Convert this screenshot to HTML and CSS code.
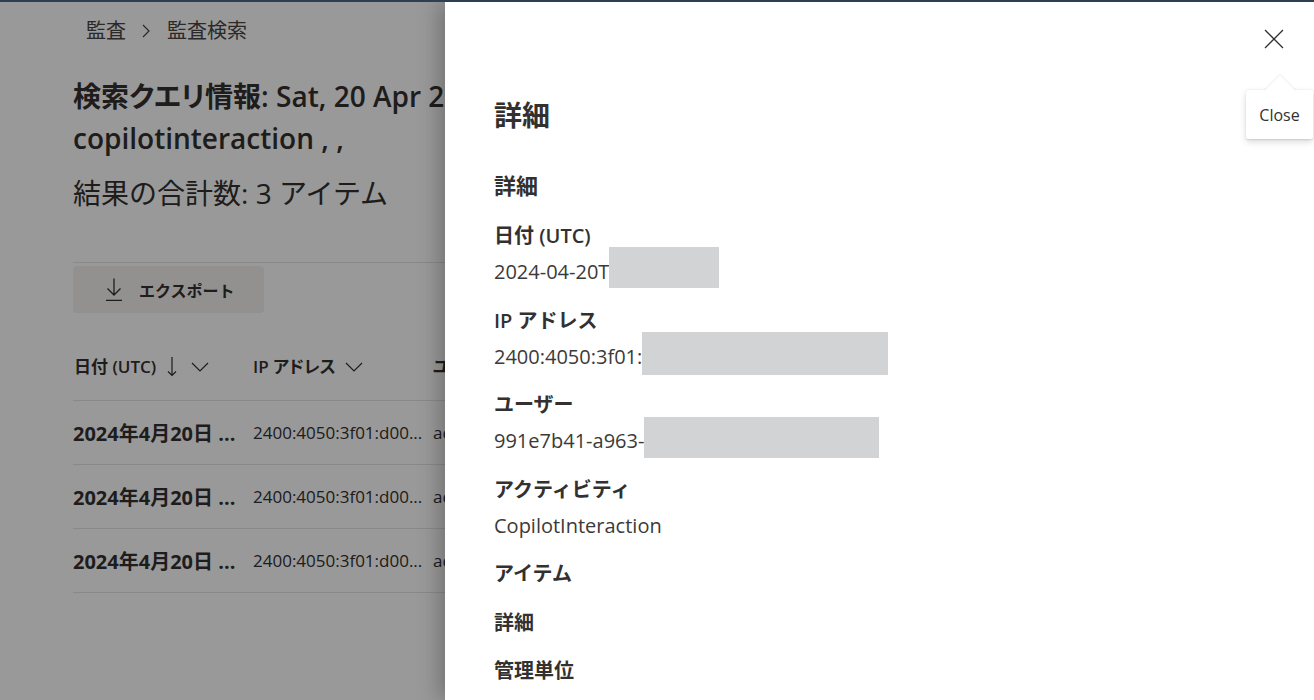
FILE: index.html
```html
<!DOCTYPE html>
<html lang="ja">
<head>
<meta charset="utf-8">
<title>監査検索</title>
<link rel="stylesheet" href="styles.css">
</head>
<body>
<div class="topbar"></div>
<main class="page">
  <nav class="breadcrumb">
    <span>監査</span>
    <svg class="crumb-chev" width="12" height="14" viewBox="0 0 12 14"><polyline points="3,1 9,7 3,13" fill="none" stroke="#484644" stroke-width="1.2"/></svg>
    <span>監査検索</span>
  </nav>
  <h1 class="title">
    <span class="line">検索クエリ情報: Sat, 20 Apr 2024 00:00:00 GMT - Sat, 20 Apr 2024 23:59:59 GMT,</span>
    <span class="line">copilotinteraction , ,</span>
  </h1>
  <p class="total">結果の合計数: 3 アイテム</p>
  <hr class="divider">
  <button class="export" type="button">
    <svg width="16" height="23" viewBox="0 0 16 23"><path d="M8 0.5V17M1.5 10.5L8 17L14.5 10.5M0 22.5H16" fill="none" stroke="#323130" stroke-width="1.3"/></svg>
    <span>エクスポート</span>
  </button>
  <div class="table">
    <div class="thead">
      <div class="th col">
        <span>日付 (UTC)</span>
        <svg class="sort" width="10" height="20" viewBox="0 0 10 20"><path d="M5 0V18.5M1 14.5L5 18.5L9 14.5" fill="none" stroke="#323130" stroke-width="1.2"/></svg>
        <svg class="chev" width="18" height="10" viewBox="0 0 18 10"><polyline points="1,1 9,9 17,1" fill="none" stroke="#323130" stroke-width="1.2"/></svg>
      </div>
      <div class="th col">
        <span>IP アドレス</span>
        <svg class="chev chev-ip" width="18" height="10" viewBox="0 0 18 10"><polyline points="1,1 9,9 17,1" fill="none" stroke="#323130" stroke-width="1.2"/></svg>
      </div>
      <div class="th col">
        <span>ユーザー</span>
      </div>
    </div>
    <div class="row">
      <div class="col date">2024年4月20日 ...</div>
      <div class="col ip">2400:4050:3f01:d00...</div>
      <div class="col user">admin@contoso.onmicrosoft.com</div>
    </div>
    <div class="row">
      <div class="col date">2024年4月20日 ...</div>
      <div class="col ip">2400:4050:3f01:d00...</div>
      <div class="col user">admin@contoso.onmicrosoft.com</div>
    </div>
    <div class="row">
      <div class="col date">2024年4月20日 ...</div>
      <div class="col ip">2400:4050:3f01:d00...</div>
      <div class="col user">admin@contoso.onmicrosoft.com</div>
    </div>
  </div>
</main>
<div class="overlay"></div>
<aside class="panel">
  <button class="close" type="button" aria-label="Close">
    <svg width="20" height="20" viewBox="0 0 20 20"><path d="M1 1L19 19M19 1L1 19" fill="none" stroke="#323130" stroke-width="1.3"/></svg>
  </button>
  <div class="tooltip">Close</div>
  <div class="panel-body">
    <h2 class="heading">詳細</h2>
    <h3 class="section">詳細</h3>
    <div class="fields">
      <div class="field">
        <div class="label">日付 (UTC)</div>
        <div class="value">2024-04-20T<span class="redact r1"></span></div>
      </div>
      <div class="field">
        <div class="label">IP アドレス</div>
        <div class="value">2400:4050:3f01:<span class="redact r2"></span></div>
      </div>
      <div class="field">
        <div class="label">ユーザー</div>
        <div class="value">991e7b41-a963-<span class="redact r3"></span></div>
      </div>
      <div class="field">
        <div class="label">アクティビティ</div>
        <div class="value">CopilotInteraction</div>
      </div>
      <div class="field">
        <div class="label">アイテム</div>
      </div>
      <div class="field">
        <div class="label">詳細</div>
      </div>
      <div class="field">
        <div class="label">管理単位</div>
      </div>
    </div>
  </div>
</aside>
</body>
</html>
```
FILE: styles.css
```css
* { box-sizing: border-box; }
html, body {
  margin: 0;
  padding: 0;
}
body {
  position: relative;
  width: 1314px;
  height: 700px;
  overflow: hidden;
  background: #ffffff;
  font-family: "Open Sans", "Noto Sans CJK JP", sans-serif;
  color: #323130;
}
.topbar {
  height: 2px;
  background: #2e3f55;
  position: relative;
  z-index: 5;
}
.page {
  width: 445px;
  overflow: hidden;
  padding: 17px 0 0 73px;
}
.breadcrumb {
  display: flex;
  align-items: center;
  padding-left: 13px;
  height: 24px;
  font-size: 20px;
  line-height: 24px;
  color: #484644;
}
.crumb-chev {
  margin: 0 15px 0 14px;
}
.title {
  margin: 32px 0 0;
  font-size: 28px;
  line-height: 42px;
  font-weight: 600;
  color: #323130;
  font-feature-settings: "palt";
}
.title .line {
  display: block;
  white-space: nowrap;
}
.total {
  margin: 16px 0 0;
  font-size: 28px;
  line-height: 36px;
  font-weight: 400;
  white-space: nowrap;
}
.divider {
  margin: 51px 0 0;
  border: 0;
  border-top: 1px solid #e6e5e4;
  height: 0;
}
.export {
  margin-top: 3px;
  width: 191px;
  height: 47px;
  display: flex;
  align-items: center;
  gap: 17px;
  padding: 0 0 0 33px;
  border: 0;
  border-radius: 4px;
  background: #f3f2f1;
  font-family: inherit;
  font-size: 16px;
  font-weight: 700;
  color: #323130;
}
.table {
  margin-top: 42px;
}
.thead {
  display: flex;
  height: 46px;
  padding-bottom: 21px;
  border-bottom: 1px solid #e6e5e4;
}
.row {
  display: flex;
  height: 64px;
  align-items: center;
  border-bottom: 1px solid #e6e5e4;
}
.col {
  width: 180px;
  flex: none;
  white-space: nowrap;
  overflow: hidden;
}
.th {
  display: flex;
  align-items: center;
  height: 24px;
  font-size: 17px;
  font-weight: 600;
  line-height: 24px;
  font-feature-settings: "palt";
}
.th:first-child { padding-left: 1px; }
.sort { margin-left: 11px; }
.chev { margin-left: 14px; }
.chev-ip { margin-left: 9px; }
.date {
  font-size: 20px;
  font-weight: 700;
  font-feature-settings: "palt";
}
.ip {
  font-size: 17px;
}
.user {
  font-size: 17px;
}
.overlay {
  position: absolute;
  top: 2px;
  left: 0;
  right: 0;
  bottom: 0;
  background: rgba(0, 0, 0, 0.4);
  z-index: 2;
}
.panel {
  position: absolute;
  top: 2px;
  left: 445px;
  right: 0;
  bottom: 0;
  background: #ffffff;
  z-index: 3;
  box-shadow: -6px 0 20px rgba(0, 0, 0, 0.25);
}
.close {
  position: absolute;
  top: 17px;
  right: 20px;
  width: 40px;
  height: 40px;
  display: flex;
  align-items: center;
  justify-content: center;
  border: 0;
  padding: 0;
  background: transparent;
}
.tooltip {
  position: absolute;
  top: 88px;
  right: 1px;
  width: 67px;
  height: 49px;
  display: flex;
  align-items: center;
  justify-content: center;
  background: #ffffff;
  border-radius: 2px;
  font-size: 16px;
  color: #323130;
  box-shadow: 0 3px 7px rgba(0, 0, 0, 0.14), 0 0.6px 1.8px rgba(0, 0, 0, 0.11);
  z-index: 1;
}
.tooltip::before {
  content: "";
  position: absolute;
  top: -10px;
  left: 23px;
  width: 22px;
  height: 22px;
  background: #ffffff;
  transform: rotate(45deg);
  box-shadow: -1px -1px 2px rgba(0, 0, 0, 0.06);
  z-index: -1;
}
.panel-body {
  padding: 93px 0 0 49px;
}
.heading {
  margin: 0;
  font-size: 28px;
  line-height: 40px;
  font-weight: 700;
}
.section {
  margin: 36px 0 0;
  font-size: 22px;
  line-height: 28px;
  font-weight: 700;
}
.fields {
  margin-top: 19px;
}
.field {
  margin-bottom: 12.5px;
}
.label {
  font-size: 20px;
  line-height: 36px;
  font-weight: 600;
}
.value {
  display: flex;
  align-items: flex-start;
  font-size: 20px;
  line-height: 36px;
  color: #3b3a39;
}
.redact {
  display: block;
  background: #d2d3d5;
}
.r1 { width: 110px; height: 41px; margin-top: -7px; }
.r2 { width: 246px; height: 43px; margin-top: -7px; }
.r3 { width: 235px; height: 41px; margin-top: -6px; }
```
